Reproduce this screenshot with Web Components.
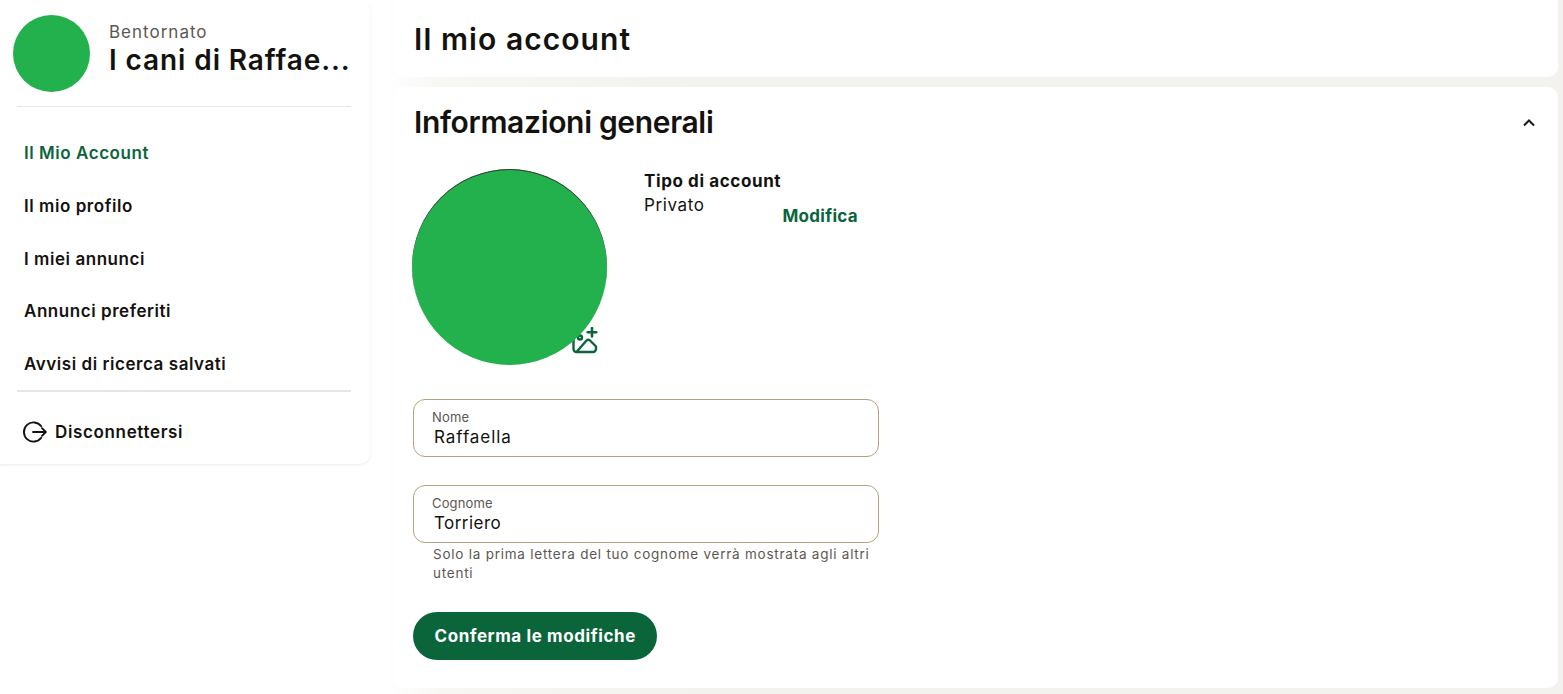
<!DOCTYPE html>
<html lang="it">
<head>
<meta charset="utf-8">
<title>Il mio account</title>
<style>
html, body { margin: 0; height: 100%; }
body {
	height: 694px;
	overflow: hidden;
	background: linear-gradient(90deg, #fff 0, #fff 385px, #f8f7f4 440px, #f3f2ee 700px);
	font-family: "Inter", "Liberation Sans", sans-serif;
	color: #14120f;
}
</style>
</head>
<body>
<app-shell>
	<side-bar slot="side">
		<nav-item active>Il Mio Account</nav-item>
		<nav-item>Il mio profilo</nav-item>
		<nav-item>I miei annunci</nav-item>
		<nav-item>Annunci preferiti</nav-item>
		<nav-item>Avvisi di ricerca salvati</nav-item>
	</side-bar>
	<title-card>Il mio account</title-card>
	<info-card heading="Informazioni generali">
		<profile-head></profile-head>
		<text-field label="Nome" value="Raffaella" style="--value-spacing: .95px"></text-field>
		<text-field label="Cognome" value="Torriero" style="--value-spacing: .45px" hint="Solo la prima lettera del tuo cognome verrà mostrata agli altri utenti"></text-field>
		<green-button>Conferma le modifiche</green-button>
	</info-card>
</app-shell>

<script>
const HEADING_FONT = `"Inter", "Liberation Sans", sans-serif`;
const BODY_FONT = `"Inter", "Liberation Sans", sans-serif`;

class BaseElement extends HTMLElement {
	constructor() {
		super();
		const template = document.createElement("template");
		template.innerHTML = this.constructor.template;
		this.attachShadow({mode: "open"});
		this.shadowRoot.appendChild(template.content.cloneNode(true));
	}
}

class AppShell extends BaseElement {
	static template = `
	<style>
	:host {
		display: grid;
		grid-template-columns: 370px 1164px;
		column-gap: 24px;
		height: 694px;
		box-sizing: border-box;
	}
	aside { align-self: start; }
	main {
		display: flex;
		flex-direction: column;
		gap: 10px;
	}
	</style>
	<aside><slot name="side"></slot></aside>
	<main><slot></slot></main>
	`;
}

class SideBar extends BaseElement {
	static template = `
	<style>
	:host {
		display: block;
		height: 464px;
		box-sizing: border-box;
		background: #fff;
		border-radius: 0 10px 10px 0;
		box-shadow: 0 1px 3px rgba(120, 110, 90, .14);
		font-family: ${BODY_FONT};
	}
	.welcome {
		display: flex;
		gap: 19px;
		padding: 15px 0 0 13px;
	}
	.dot {
		width: 77px;
		height: 77px;
		border-radius: 50%;
		background: #23b14d;
	}
	.hello {
		font-size: 17px;
		line-height: 20px;
		letter-spacing: 1px;
		color: #5d5751;
		margin: 7px 0 2px;
	}
	.name {
		font-family: ${HEADING_FONT};
		font-size: 28px;
		line-height: 32px;
		letter-spacing: .9px;
		font-weight: 600;
		white-space: nowrap;
	}
	hr {
		border: 0;
		margin: 0 19px 0 17px;
		background: #ebe8e2;
	}
	.top { height: 1px; margin-top: 14px; }
	.items {
		display: flex;
		flex-direction: column;
		padding: 20.2px 0 0 24px;
	}
	.bottom { height: 2px; background: #e9e4e0; margin-top: -1.2px; }
	.out {
		display: flex;
		align-items: center;
		gap: 8px;
		padding: 29px 0 0 23px;
		font-size: 17px;
		font-weight: 600;
		letter-spacing: .65px;
	}
	svg { display: block; }
	</style>
	<div class="welcome">
		<div class="dot"></div>
		<div>
			<div class="hello">Bentornato</div>
			<div class="name">I cani di Raffae...</div>
		</div>
	</div>
	<hr class="top">
	<div class="items"><slot></slot></div>
	<hr class="bottom">
	<div class="out">
		<svg width="24" height="22" viewBox="0 0 24 22" fill="none" stroke="#14120f" stroke-width="1.9" stroke-linecap="round" stroke-linejoin="round">
			<path d="M18.2 5.2A9.6 9.6 0 1 0 18.2 16.8"/>
			<path d="M10 11H22.6M19 7.2L22.8 11L19 14.8"/>
		</svg>
		<span>Disconnettersi</span>
	</div>
	`;
}

class NavItem extends BaseElement {
	static template = `
	<style>
	:host {
		display: block;
		height: 52.75px;
		line-height: 52.75px;
		font-size: 17px;
		font-weight: 600;
		letter-spacing: .55px;
		color: #14120f;
	}
	:host([active]) { color: #0b653b; }
	</style>
	<slot></slot>
	`;
}

class TitleCard extends BaseElement {
	static template = `
	<style>
	:host {
		display: block;
		height: 77px;
		box-sizing: border-box;
		padding: 20px 0 0 20px;
		background: #fff;
		border-radius: 0 0 10px 10px;
		font-family: ${HEADING_FONT};
		font-size: 30px;
		line-height: 38px;
		letter-spacing: 1.07px;
		font-weight: 600;
	}
	</style>
	<slot></slot>
	`;
}

class InfoCard extends BaseElement {
	static template = `
	<style>
	:host {
		display: block;
		height: 601px;
		box-sizing: border-box;
		padding: 16px 20px 0 19px;
		background: #fff;
		border-radius: 10px;
	}
	header {
		display: flex;
		align-items: center;
		justify-content: space-between;
		height: 38px;
		padding-left: 1px;
		font-family: ${HEADING_FONT};
		font-size: 30px;
		letter-spacing: -.33px;
		font-weight: 600;
	}
	svg { display: block; margin-right: 2px; }
	</style>
	<header>
		<span id="heading"></span>
		<svg width="14" height="9" viewBox="0 0 14 9" fill="none" stroke="#1c1a18" stroke-width="2"><path d="M2 7.5L7 2.5L12 7.5"/></svg>
	</header>
	<slot></slot>
	`;

	connectedCallback() {
		this.shadowRoot.getElementById("heading").textContent = this.getAttribute("heading");
	}
}

class ProfileHead extends BaseElement {
	static template = `
	<style>
	:host {
		display: flex;
		width: 466px;
		margin-top: 28px;
		height: 230px;
		font-size: 17px;
		line-height: 24px;
	}
	.photo {
		position: relative;
		width: 195px;
		height: 196px;
		margin-left: -1px;
		flex: none;
	}
	.ring {
		position: relative;
		width: 195px;
		height: 196px;
		border-radius: 50%;
		background: #23b14d;
		box-shadow: inset 0 1px 0 #3c3a38;
	}
	svg {
		position: absolute;
		left: 158px;
		top: 158px;
	}
	.kind {
		margin: 0 0 0 37px;
		letter-spacing: .6px;
	}
	b { display: block; font-weight: 700; }
	.edit {
		color: #0b653b;
		font-weight: 700;
		letter-spacing: .3px;
		align-self: flex-start;
		margin: 35px 0 0 auto;
		padding-right: 21px;
	}
	</style>
	<div class="photo">
		<svg width="29" height="28" viewBox="0 0 29 28" fill="none" stroke="#0b653b" stroke-width="2.4" stroke-linecap="round" stroke-linejoin="round">
			<circle cx="10" cy="10.5" r="2"/>
			<path d="M22 1V9.5M17.7 5.2H26.3" stroke-width="2.6"/>
			<path d="M3.5 12V22A3 3 0 0 0 6.5 25H23A3 3 0 0 0 26 22V19.5L20 13.5A2.5 2.5 0 0 0 16.5 13.5L6.5 25" fill="#fff"/>
		</svg>
		<div class="ring"></div>
	</div>
	<div class="kind">
		<b>Tipo di account</b>
		<span>Privato</span>
	</div>
	<div class="edit">Modifica</div>
	`;
}

class TextField extends BaseElement {
	static template = `
	<style>
	:host {
		display: block;
		width: 466px;
		margin-bottom: 28px;
	}
	.box {
		height: 58px;
		box-sizing: border-box;
		border: 1px solid #b3a27f;
		border-radius: 12px;
		padding: 9px 0 0 18px;
		background: #fff;
	}
	.label {
		font-size: 13px;
		line-height: 16px;
		letter-spacing: .15px;
		color: #5d5751;
	}
	.value {
		font-size: 17px;
		line-height: 22px;
		letter-spacing: var(--value-spacing, .7px);
		padding: 1px 0 0 2px;
	}
	.hint {
		margin: 2px 0 0 20px;
		padding-bottom: 1px;
		font-size: 13.5px;
		line-height: 19px;
		color: #5d5751;
		letter-spacing: .76px;
	}
	.hint:empty { display: none; }
	</style>
	<div class="box">
		<div class="label" id="label"></div>
		<div class="value" id="value"></div>
	</div>
	<div class="hint" id="hint"></div>
	`;

	connectedCallback() {
		this.shadowRoot.getElementById("label").textContent = this.getAttribute("label");
		this.shadowRoot.getElementById("value").textContent = this.getAttribute("value");
		this.shadowRoot.getElementById("hint").textContent = this.getAttribute("hint") || "";
	}
}

class GreenButton extends BaseElement {
	static template = `
	<style>
	:host {
		display: inline-block;
		height: 48px;
		line-height: 48px;
		padding: 0 21.5px;
		border-radius: 24px;
		background: #0b653b;
		color: #fff;
		font-size: 17px;
		font-weight: 700;
		letter-spacing: .6px;
	}
	</style>
	<slot></slot>
	`;
}

customElements.define("app-shell", AppShell);
customElements.define("side-bar", SideBar);
customElements.define("nav-item", NavItem);
customElements.define("title-card", TitleCard);
customElements.define("info-card", InfoCard);
customElements.define("profile-head", ProfileHead);
customElements.define("text-field", TextField);
customElements.define("green-button", GreenButton);
</script>
</body>
</html>
